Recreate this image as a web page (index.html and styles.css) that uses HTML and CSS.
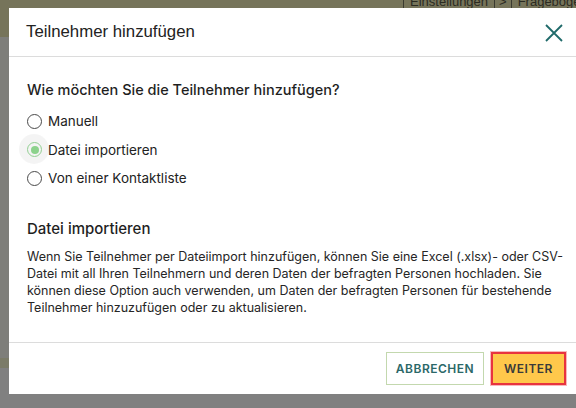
FILE: index.html
```html
<!DOCTYPE html>
<html lang="de">
<head>
<meta charset="utf-8">
<title>Teilnehmer hinzufügen</title>
<link rel="stylesheet" href="styles.css">
</head>
<body>
<div class="backdrop">
  <div class="app-bar">
    <span class="crumb">Einstellungen</span>
    <span class="crumb-sep">&gt;</span>
    <span class="crumb">Fragebogen</span>
  </div>
  <div class="dialog">
    <header class="dialog-head">
      <h1 class="dialog-title">Teilnehmer hinzufügen</h1>
      <button class="close-btn" aria-label="Schließen">
        <svg width="18" height="18" viewBox="0 0 18 18"><path d="M1 1 L17 17 M17 1 L1 17" stroke="#1f6a6a" stroke-width="1.8" fill="none"/></svg>
      </button>
    </header>
    <div class="dialog-body">
      <h2 class="question">Wie möchten Sie die Teilnehmer hinzufügen?</h2>
      <div class="options">
        <label class="option"><span class="radio"></span>Manuell</label>
        <label class="option selected"><span class="radio"><span class="dot"></span></span>Datei importieren</label>
        <label class="option"><span class="radio"></span>Von einer Kontaktliste</label>
      </div>
      <h3 class="section-title">Datei importieren</h3>
      <p class="desc">Wenn Sie Teilnehmer per Dateiimport hinzufügen, können Sie eine Excel (.xlsx)- oder CSV-Datei mit all Ihren Teilnehmern und deren Daten der befragten Personen hochladen. Sie können diese Option auch verwenden, um Daten der befragten Personen für bestehende Teilnehmer hinzuzufügen oder zu aktualisieren.</p>
    </div>
    <footer class="dialog-foot">
      <button class="btn btn-outline">ABBRECHEN</button>
      <button class="btn btn-primary">WEITER</button>
    </footer>
  </div>
</div>
</body>
</html>
```

FILE: styles.css
```css
* { box-sizing: border-box; }
html, body { margin: 0; padding: 0; }
body {
  width: 576px;
  height: 408px;
  overflow: hidden;
  background: #7f7f7c;
  font-family: Inter, "Liberation Sans", sans-serif;
}
.backdrop {
  position: relative;
  height: 408px;
  background: linear-gradient(#76745a 0 37px, #7e7e7a 37px 358px, #7b7b68 358px 368px, #808080 368px);
}
.app-bar {
  position: absolute;
  top: -5px;
  left: 403px;
  display: flex;
  align-items: center;
  height: 14px;
  font-family: "Liberation Sans", sans-serif;
  font-size: 13px;
  line-height: 14px;
  color: #2b2b22;
}
.crumb { padding: 0 6px; border-left: 1px solid #3a3a30; }
.crumb-sep { padding: 0 4px; border-left: 1px solid #3a3a30; }
.dialog {
  position: absolute;
  top: 8px;
  left: 9px;
  width: 580px;
  height: 386px;
  background: #fff;
  display: flex;
  flex-direction: column;
}
.dialog-head {
  height: 49px;
  border-bottom: 1px solid #dcdcdc;
  display: flex;
  align-items: center;
  justify-content: space-between;
  padding: 0 26px 0 17px;
}
.dialog-title {
  margin: 0;
  font-family: "Liberation Sans", Arial, sans-serif;
  font-weight: 400;
  font-size: 16.8px;
  color: #222;
}
.close-btn {
  border: 0;
  background: none;
  padding: 0;
  width: 18px;
  height: 18px;
  margin-top: 2px;
}
.dialog-body {
  flex: 1;
  padding: 24px 14px 0 18px;
  color: #1f1f1f;
}
.question {
  margin: 0;
  font-size: 14.5px;
  font-weight: 500;
  line-height: 18px;
}
.options {
  display: flex;
  flex-direction: column;
  gap: 10.5px;
  margin-top: 13px;
}
.option {
  display: flex;
  align-items: center;
  gap: 6px;
  font-size: 13.5px;
  line-height: 18px;
  color: #222;
}
.radio {
  position: relative;
  width: 15px;
  height: 15px;
  border: 1.3px solid #4a4a4a;
  border-radius: 50%;
  display: flex;
  align-items: center;
  justify-content: center;
  flex: none;
}
.option.selected .radio { border-color: #9ad99a; }
.option.selected .radio::before {
  content: "";
  position: absolute;
  left: -9px;
  top: -9px;
  width: 30px;
  height: 30px;
  border-radius: 50%;
  background: rgba(0,0,0,0.045);
}
.dot {
  width: 8px;
  height: 8px;
  border-radius: 50%;
  background: #93dc93;
}
.section-title {
  margin: 33px 0 0;
  font-size: 15px;
  font-weight: 500;
  line-height: 18px;
}
.desc {
  margin: 10px 0 0;
  font-size: 12.5px;
  line-height: 17px;
  color: #262626;
  width: 546px;
}
.dialog-foot {
  height: 52px;
  border-top: 1px solid #dcdcdc;
  display: flex;
  align-items: flex-start;
  gap: 7px;
  padding: 9px 0 0 377px;
}
.btn {
  font-family: Inter, "Liberation Sans", sans-serif;
  font-size: 12px;
  font-weight: 600;
  letter-spacing: 0.5px;
  height: 33px;
}
.btn-outline {
  width: 98px;
  background: #fff;
  border: 1px solid #c3d8ae;
  color: #2b6868;
}
.btn-primary {
  width: 75px;
  background: #ffc84b;
  border: 2px solid #e8343f;
  color: #3a3a3a;
  box-shadow: 0 0 0 1px rgba(232,52,63,0.35);
}
```
